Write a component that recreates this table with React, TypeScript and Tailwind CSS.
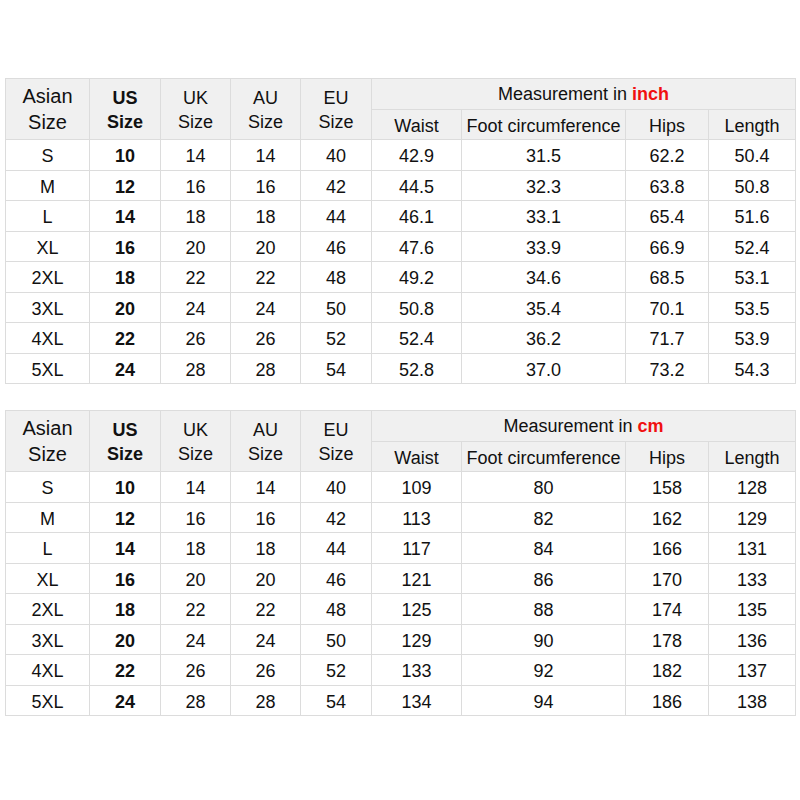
import React from 'react'

type Row = [string, string, string, string, string, string, string, string, string]

const inchRows: Row[] = [
  ['S', '10', '14', '14', '40', '42.9', '31.5', '62.2', '50.4'],
  ['M', '12', '16', '16', '42', '44.5', '32.3', '63.8', '50.8'],
  ['L', '14', '18', '18', '44', '46.1', '33.1', '65.4', '51.6'],
  ['XL', '16', '20', '20', '46', '47.6', '33.9', '66.9', '52.4'],
  ['2XL', '18', '22', '22', '48', '49.2', '34.6', '68.5', '53.1'],
  ['3XL', '20', '24', '24', '50', '50.8', '35.4', '70.1', '53.5'],
  ['4XL', '22', '26', '26', '52', '52.4', '36.2', '71.7', '53.9'],
  ['5XL', '24', '28', '28', '54', '52.8', '37.0', '73.2', '54.3'],
]

const cmRows: Row[] = [
  ['S', '10', '14', '14', '40', '109', '80', '158', '128'],
  ['M', '12', '16', '16', '42', '113', '82', '162', '129'],
  ['L', '14', '18', '18', '44', '117', '84', '166', '131'],
  ['XL', '16', '20', '20', '46', '121', '86', '170', '133'],
  ['2XL', '18', '22', '22', '48', '125', '88', '174', '135'],
  ['3XL', '20', '24', '24', '50', '129', '90', '178', '136'],
  ['4XL', '22', '26', '26', '52', '133', '92', '182', '137'],
  ['5XL', '24', '28', '28', '54', '134', '94', '186', '138'],
]

const cell = 'border border-[#dcdcdc] text-center align-middle p-0 pt-[3px] leading-[20px]'
const head = cell + ' bg-[#f0f0f0] font-normal'
// two-line headers (Asian / US / UK / AU / EU)
const stack = head + ' !leading-[24px] !pt-[2px]'

function SizeTable({ unit, rows }: { unit: string; rows: Row[] }) {
  return (
    <table className="w-[790px] table-fixed border-collapse text-[18px] text-[#111]">
      <colgroup>
        <col className="w-[84px]" />
        <col className="w-[71px]" />
        <col className="w-[70px]" />
        <col className="w-[70px]" />
        <col className="w-[71px]" />
        <col className="w-[90px]" />
        <col className="w-[164px]" />
        <col className="w-[83px]" />
        <col className="w-[87px]" />
      </colgroup>
      <thead>
        <tr className="h-[30.5px]">
          <th rowSpan={2} className={head + ' text-[20px] !leading-[26px] !pt-0'}>
            Asian
            <br />
            Size
          </th>
          <th rowSpan={2} className={stack + ' !font-bold'}>
            US
            <br />
            Size
          </th>
          <th rowSpan={2} className={stack}>
            UK
            <br />
            Size
          </th>
          <th rowSpan={2} className={stack}>
            AU
            <br />
            Size
          </th>
          <th rowSpan={2} className={stack}>
            EU
            <br />
            Size
          </th>
          <th colSpan={4} className={head + ' !pt-[1px]'}>
            Measurement in <span className="font-bold text-[#f01010]">{unit}</span>
          </th>
        </tr>
        <tr className="h-[30.5px]">
          <th className={head}>Waist</th>
          <th className={head}>Foot circumference</th>
          <th className={head}>Hips</th>
          <th className={head}>Length</th>
        </tr>
      </thead>
      <tbody>
        {rows.map((r) => (
          <tr key={r[0]} className="h-[30.5px]">
            {r.map((v, i) => (
              <td key={i} className={cell + (i === 1 ? ' font-bold' : '')}>
                {v}
              </td>
            ))}
          </tr>
        ))}
      </tbody>
    </table>
  )
}

export default function App() {
  return (
    <div className="w-[800px] h-[800px] bg-white pt-[78px] px-[5px] font-['Liberation_Sans',Arial,sans-serif]">
      <div className="flex flex-col gap-[26px]">
        <SizeTable unit="inch" rows={inchRows} />
        <SizeTable unit="cm" rows={cmRows} />
      </div>
    </div>
  )
}
